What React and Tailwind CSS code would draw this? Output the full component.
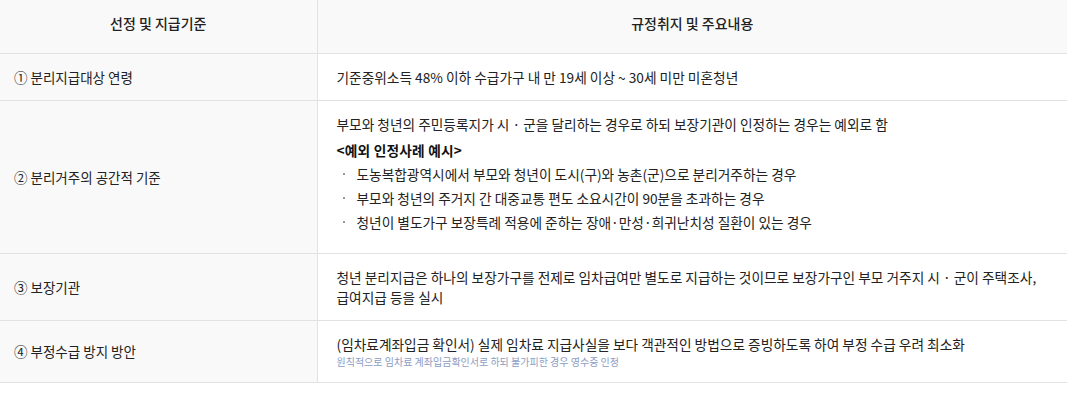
import React from 'react';

const rows = [
  {
    label: '① 분리지급대상 연령',
    body: (
      <p>기준중위소득 48% 이하 수급가구 내 만 19세 이상 ~ 30세 미만 미혼청년</p>
    ),
  },
  {
    label: '② 분리거주의 공간적 기준',
    body: (
      <div className="pb-2">
        <p>부모와 청년의 주민등록지가 시 · 군을 달리하는 경우로 하되 보장기관이 인정하는 경우는 예외로 함</p>
        <p className="mt-[6px] font-bold tracking-[0.2px] text-[#111]">&lt;예외 인정사례 예시&gt;</p>
        <ul className="mt-1 flex flex-col gap-1">
          {[
            '도농복합광역시에서 부모와 청년이 도시(구)와 농촌(군)으로 분리거주하는 경우',
            '부모와 청년의 주거지 간 대중교통 편도 소요시간이 90분을 초과하는 경우',
            '청년이 별도가구 보장특례 적용에 준하는 장애·만성·희귀난치성 질환이 있는 경우',
          ].map((t) => (
            <li key={t} className="flex items-center">
              <span className="ml-[6px] mr-[12px] h-[2px] w-[2px] bg-[#999]" />
              <span>{t}</span>
            </li>
          ))}
        </ul>
      </div>
    ),
  },
  {
    label: '③ 보장기관',
    body: (
      <p className="break-keep">
        청년 분리지급은 하나의 보장가구를 전제로 임차급여만 별도로 지급하는 것이므로 보장가구인 부모 거주지 시 · 군이 주택조사,
        급여지급 등을 실시
      </p>
    ),
  },
  {
    label: '④ 부정수급 방지 방안',
    body: (
      <div>
        <p>(임차료계좌입금 확인서) 실제 임차료 지급사실을 보다 객관적인 방법으로 증빙하도록 하여 부정 수급 우려 최소화</p>
        <p className="text-[10px] leading-[15px] text-[#8c9cc4]">
          원칙적으로 임차료 계좌입금확인서로 하되 불가피한 경우 영수증 인정
        </p>
      </div>
    ),
  },
];

export default function App() {
  return (
    <div
      className="min-h-[407px] bg-white text-[13.7px] leading-[20px] text-[#222]"
      style={{ fontFamily: '"Noto Sans CJK KR", "Noto Sans", sans-serif' }}
    >
      <table className="w-[1067px] table-fixed border-collapse">
        <colgroup>
          <col className="w-[317px]" />
          <col />
        </colgroup>
        <thead>
          <tr className="h-[53px] border-b border-[#e2e2e2] bg-[#f9f9f9]">
            <th className="pb-[6px] text-center text-[14px] font-medium text-[#222]">선정 및 지급기준</th>
            <th className="border-l border-[#e2e2e2] pb-[6px] text-center text-[14px] font-medium text-[#222]">
              규정취지 및 주요내용
            </th>
          </tr>
        </thead>
        <tbody>
          {rows.map((r) => (
            <tr key={r.label} className="border-b border-[#e2e2e2]">
              <td className="bg-[#f9f9f9] px-[14px] align-middle text-[13.5px]">{r.label}</td>
              <td className="border-l border-[#e2e2e2] bg-white py-[13px] pl-[19px] pr-1 text-left align-middle">
                {r.body}
              </td>
            </tr>
          ))}
        </tbody>
      </table>
    </div>
  );
}
